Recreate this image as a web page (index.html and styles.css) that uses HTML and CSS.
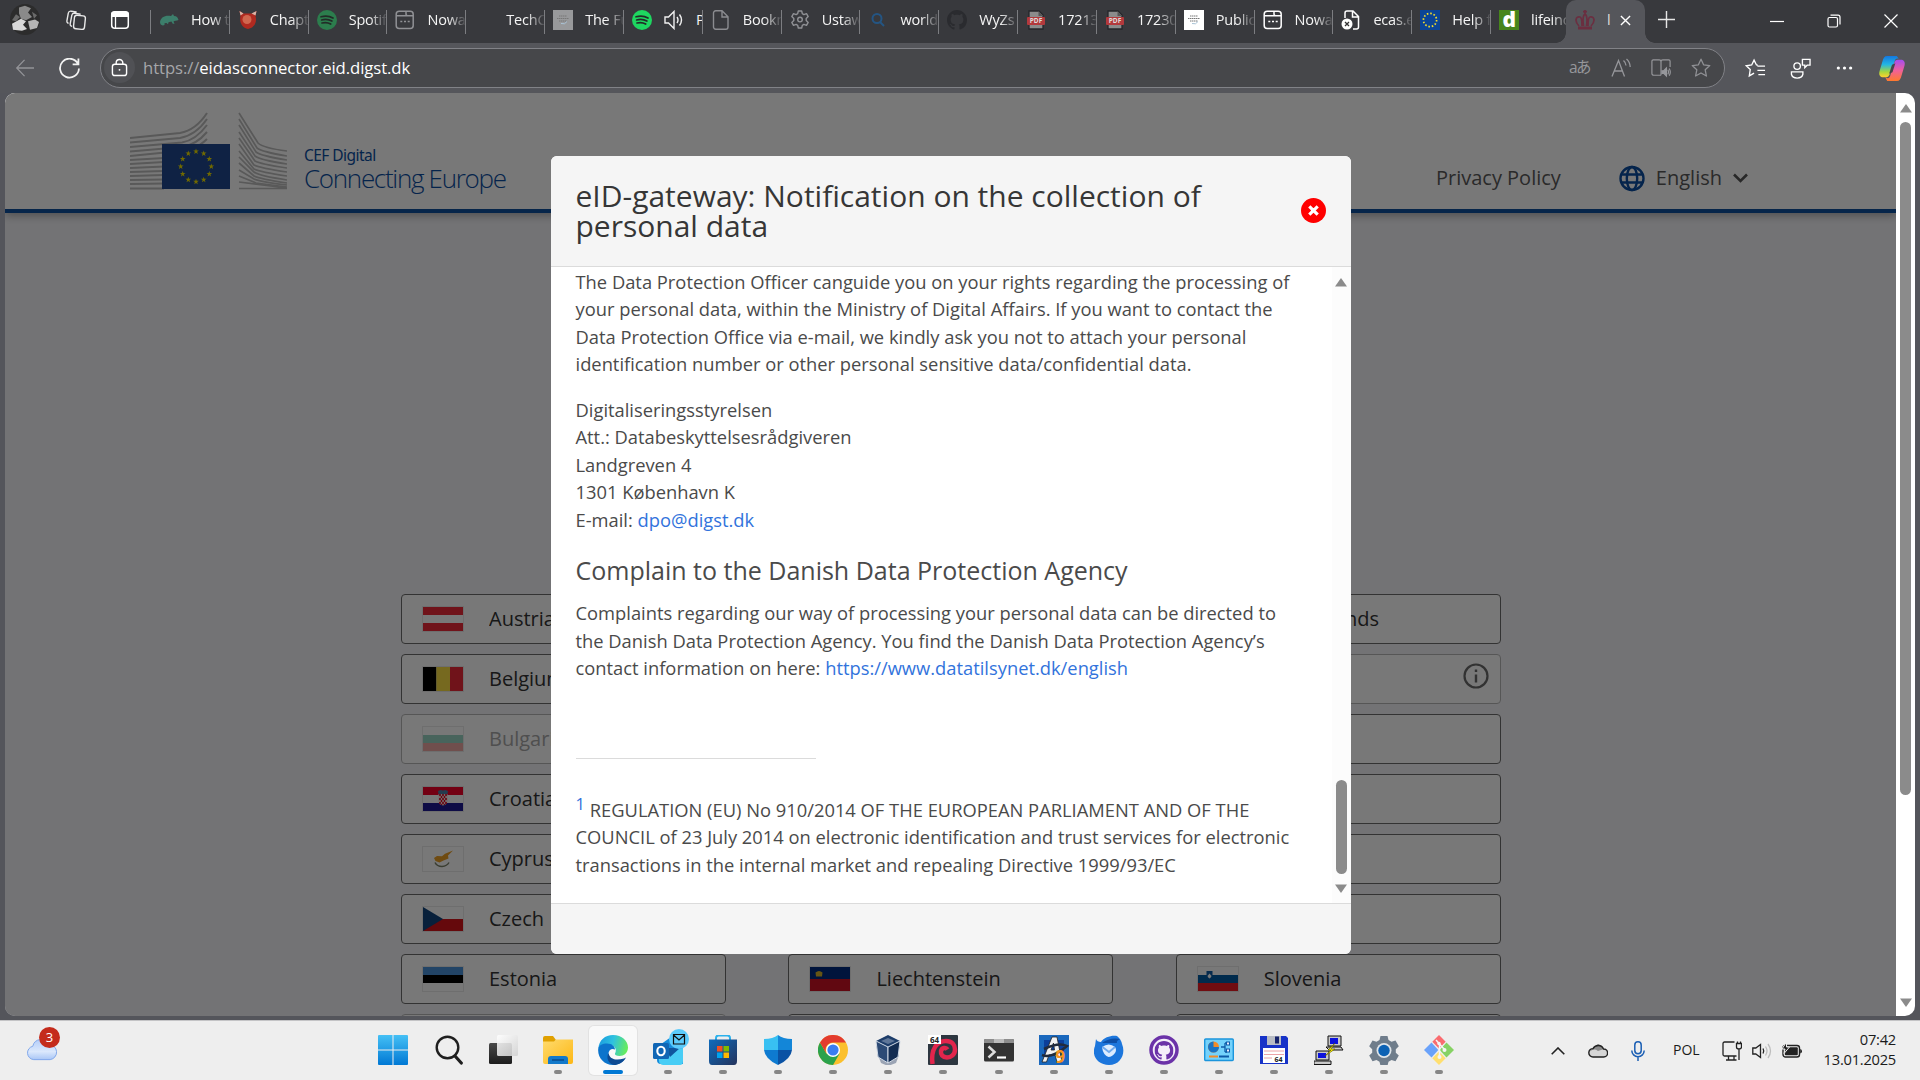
FILE: index.html
```html
<!DOCTYPE html>
<html lang="en">
<head>
<meta charset="utf-8">
<title>eIDAS connector</title>
<link rel="stylesheet" href="styles.css">
</head>
<body>
<svg class="defs" width="0" height="0" aria-hidden="true">
  <defs>
    <linearGradient id="gWin" x1="0" y1="0" x2="0" y2="1"><stop offset="0" stop-color="#45c0f5"/><stop offset="1" stop-color="#0078d4"/></linearGradient>
    <linearGradient id="gFolder" x1="0" y1="0" x2="1" y2="1"><stop offset="0" stop-color="#ffdb6e"/><stop offset="1" stop-color="#fdb714"/></linearGradient>
    <linearGradient id="gEdge" x1="0" y1="0.2" x2="1" y2="0.4"><stop offset="0" stop-color="#1a9be0"/><stop offset="0.5" stop-color="#2fc2df"/><stop offset="1" stop-color="#66eb5e"/></linearGradient>
    <linearGradient id="gStore" x1="0" y1="0" x2="1" y2="1"><stop offset="0" stop-color="#0f6cbd"/><stop offset="1" stop-color="#24335c"/></linearGradient>
    <linearGradient id="gCloud" x1="0" y1="0" x2="0" y2="1"><stop offset="0" stop-color="#b4cdf8"/><stop offset="0.6" stop-color="#dbe8fc"/><stop offset="1" stop-color="#a9c6f6"/></linearGradient>
    <linearGradient id="gCop1" x1="0" y1="0" x2="0" y2="1"><stop offset="0" stop-color="#1377e0"/><stop offset="0.4" stop-color="#22b6e4"/><stop offset="0.75" stop-color="#a6d63e"/><stop offset="1" stop-color="#ffd02e"/></linearGradient>
    <linearGradient id="gCop2" x1="0" y1="0" x2="0" y2="1"><stop offset="0" stop-color="#a44df0"/><stop offset="0.5" stop-color="#f0609b"/><stop offset="1" stop-color="#ff7a2c"/></linearGradient>
    <linearGradient id="gDark" x1="0" y1="0" x2="0" y2="1"><stop offset="0" stop-color="#4a4a4a"/><stop offset="1" stop-color="#1c1c1c"/></linearGradient>
    <linearGradient id="gGlass" x1="0" y1="0" x2="1" y2="1"><stop offset="0" stop-color="#fff"/><stop offset="1" stop-color="#d2d2d2"/></linearGradient>
    <path id="star" d="M0-3 .7-.95 2.85-.93 1.13.37 1.76 2.43 0 1.2-1.76 2.43-1.13.37-2.85-.93-.7-.95z"/>
    <symbol id="spotify" viewBox="0 0 20 20"><circle cx="10" cy="10" r="10" fill="currentColor"/><path d="M4 6.8c4-1.2 8.600-.8 12 1.200M4.600 10c3.500-1 7.300-.6 10.300 1.100M5 13c3-.8 6.200-.5 8.700 1" fill="none" stroke="#222b27" stroke-width="1.700" stroke-linecap="round"/></symbol>
    <symbol id="window" viewBox="0 0 20 20"><rect x="1.200" y="1.200" width="17" height="17.300" rx="3" fill="none" stroke="currentColor" stroke-width="1.500"/><path d="M11 1.200v2.800q0 1.800 1.800 1.800H18M1.200 5.800H11M5.300 11.500h2M9 11.500h2M12.700 11.500h2" fill="none" stroke="currentColor" stroke-width="1.500"/></symbol>
    <symbol id="pdf" viewBox="0 0 20 20"><path d="M3 1h10l4 4v14H3z" fill="#8b8b8b" stroke="#25262a" stroke-width="1.300"/><path d="M12.500 1v5H17" fill="#555"/><rect x="1" y="7" width="18" height="8" rx="1" fill="#b3393c"/><text x="10" y="13.400" text-anchor="middle" class="pdf-label">PDF</text></symbol>
    <symbol id="wef" viewBox="0 0 20 20"><rect width="20" height="20" fill="currentColor"/><path d="M6 6h8M4 8.500h12M6 11h8" stroke="#777" stroke-width="1" stroke-dasharray="1.500 .5"/><path d="M8 13.500q4 1.500 6-2" fill="none" stroke="#a9c3d6"/></symbol>
    <symbol id="eustars" viewBox="-10 -10 20 20"><circle r="6.600" fill="none" stroke="#f4dd2a" stroke-width="1.700" stroke-dasharray="1.600 1.856"/></symbol>
    <symbol id="favstar" viewBox="0 0 20 20"><path d="M10 1.200l2.600 5.600 6.200.8-4.600 4.200 1.200 6.200L10 15l-5.400 3 1.200-6.200L1.200 7.600l6.200-.8z" fill="none" stroke="currentColor" stroke-width="1.300" stroke-linejoin="round"/></symbol>
    <symbol id="gear" viewBox="0 0 20 20"><path d="M8.300 1h3.400l.6 2.700 1.600.9 2.600-.9 1.700 2.900-2 1.900v2l2 1.900-1.700 2.900-2.600-.9-1.600.9-.6 2.700H8.300l-.6-2.700-1.600-.9-2.600.9-1.700-2.900 2-1.900v-2l-2-1.900 1.700-2.900 2.600.9 1.600-.9z" fill="none" stroke="currentColor" stroke-width="1.400" stroke-linejoin="round"/><circle cx="10" cy="9.600" r="2.300" fill="none" stroke="currentColor" stroke-width="1.400"/></symbol>
    <symbol id="octocat" viewBox="0 0 16 16"><path fill="currentColor" d="M8 0C3.580 0 0 3.580 0 8c0 3.540 2.290 6.530 5.470 7.590.4.070.55-.17.55-.38 0-.19-.01-.82-.01-1.490-2.010.37-2.530-.49-2.690-.94-.09-.23-.48-.94-.82-1.130-.28-.15-.68-.52-.01-.53.63-.01 1.080.58 1.230.82.72 1.210 1.870.87 2.330.66.07-.52.28-.87.51-1.070-1.780-.2-3.640-.89-3.640-3.950 0-.87.310-1.590.82-2.150-.08-.2-.36-1.020.08-2.120 0 0 .67-.21 2.200.82.64-.18 1.320-.27 2-.27s1.360.09 2 .27c1.530-1.040 2.200-.82 2.200-.82.440 1.100.16 1.920.08 2.120.51.56.82 1.270.82 2.150 0 3.070-1.870 3.750-3.650 3.950.290.250.540.730.540 1.480 0 1.070-.01 1.930-.01 2.200 0 .210.150.460.550.380A8.010 8.010 0 0 0 16 8c0-4.420-3.580-8-8-8z"/></symbol>
  </defs>
</svg>

<div class="tabstrip">
  <div class="strip-tools">
    <svg class="avatar" viewBox="0 0 30 36" preserveAspectRatio="none"><ellipse cx="15" cy="18" rx="15" ry="18" fill="#2c2c2c"/><path d="M9 4l6-2 6 3-3 5 4 5-6 4-5-2-2-6z" fill="#8a8a8a"/><path d="M2 23l9-6 5 3-3 4 4 5-5 2-9-1z" fill="#d8d8d8"/><path d="M18 20l7-2 4 3-2 7-7 2z" fill="#b5b5b5"/><path d="M6 12l4 3-4 5-4-1zM22 9l5 4-3 4z" fill="#6a6a6a"/></svg>
    <svg class="i22" viewBox="0 0 22 22" fill="none" stroke="#e8e8e8" stroke-width="1.400"><rect x="9" y="6.500" width="11" height="13.500" rx="2.500" transform="rotate(6 14 13)"/><path d="M7 17.500l-1-.6a2 2 0 0 1-.8-2.100l1.600-8.500a2.500 2.500 0 0 1 2.800-2l6 .9M3.500 14.500l-.8-.6a2 2 0 0 1-.8-2.100l1.400-7.600a2.500 2.500 0 0 1 2.800-2l5.500.8"/></svg>
    <svg class="i22 vtabs" viewBox="0 0 22 22"><rect x="2.700" y="2.700" width="16.600" height="16.600" rx="3" fill="none" stroke="#fff" stroke-width="1.500"/><path d="M2 8V5.500A3 3 0 0 1 5 2.500h12a3 3 0 0 1 3 3V8z" fill="#fff"/><path d="M6.500 8v11" stroke="#fff" stroke-width="1.300"/></svg>
  </div>
  <div class="tabs">
    <div class="tab"><svg viewBox="0 0 20 20"><path d="M1 12c1-5 5-7 11-6l2-2 1 2c3 0 4 2 4.500 4-2 1-4 .8-5 1.500l1 2.500-2-.5-1-2-3 .8-.5 2-1.500-1.300c-2-.5-3 1.500-1.500 1.700C3 16.500 1 14.500 1 12z" fill="#3c7e6b"/></svg><span>How t</span></div>
    <div class="tab"><svg viewBox="0 0 20 20"><path d="M1.500 1l4 2.500h8.500L18.500 1l-1 5c2 7-2 12-7.500 13C4 18 1 12 2.500 6z" fill="#b02a20"/><circle cx="9" cy="9.500" r="4.500" fill="#d0674f"/><path d="M1.500 1l4 2.500-3 2zM18.500 1l-5 2.500 4 2z" fill="#d9b5a8"/></svg><span>Chapt</span></div>
    <div class="tab"><svg class="dimgreen"><use href="#spotify"/></svg><span>Spotif</span></div>
    <div class="tab"><svg class="gray"><use href="#window"/></svg><span>Nowa</span></div>
    <div class="tab"><svg></svg><span>TechC</span></div>
    <div class="tab"><svg class="lgray"><use href="#wef"/></svg><span>The Fu</span></div>
    <div class="tab audio"><svg class="green"><use href="#spotify"/></svg><svg viewBox="0 0 20 20" fill="none" stroke="#f0f0f0" stroke-width="1.400"><path d="M1 7h3.500L10 1.500v17L4.500 13H1zM13 7q2 3 0 6M15.500 4.500q4 5.500 0 11"/></svg><span>P</span></div>
    <div class="tab"><svg viewBox="0 0 20 20" fill="none" stroke="#8b8c90" stroke-width="1.400"><path d="M2.500 3a2.200 2.200 0 0 1 2.200-2.200H11l6 6V17a2.200 2.200 0 0 1-2.200 2.200H4.700A2.200 2.200 0 0 1 2.500 17zM11 1v6h6"/></svg><span>Bookm</span></div>
    <div class="tab"><svg class="gray"><use href="#gear"/></svg><span>Ustaw</span></div>
    <div class="tab"><svg viewBox="0 0 20 20" fill="none" stroke="#245583" stroke-width="2"><circle cx="9" cy="8.500" r="4.500"/><path d="M12 12l4 4"/></svg><span>world</span></div>
    <div class="tab"><svg class="dark"><use href="#octocat"/></svg><span>WyZs</span></div>
    <div class="tab"><svg><use href="#pdf"/></svg><span>17213</span></div>
    <div class="tab"><svg><use href="#pdf"/></svg><span>17230</span></div>
    <div class="tab"><svg class="white"><use href="#wef"/></svg><span>Public</span></div>
    <div class="tab"><svg class="white"><use href="#window"/></svg><span>Nowa</span></div>
    <div class="tab"><svg viewBox="0 0 20 20"><path d="M4 8V3A2 2 0 0 1 6 1h6l5.500 5.500V17a2 2 0 0 1-2 2H12M11.500 1v6h6" fill="none" stroke="#fff" stroke-width="1.500"/><circle cx="6" cy="14" r="5.500" fill="#fff"/><path d="M4 12l4 4m0-4l-4 4" stroke="#333" stroke-width="1.300"/></svg><span>ecas.e</span></div>
    <div class="tab"><svg viewBox="0 0 20 20"><rect width="20" height="20" fill="#0b4597"/><use href="#eustars" width="20" height="20"/></svg><span>Help f</span></div>
    <div class="tab"><svg viewBox="0 0 20 20"><rect width="20" height="20" fill="#47851c"/><text x="10.300" y="16.800" text-anchor="middle" class="dlogo">d</text></svg><span>lifeinc</span></div>
  </div>
  <div class="tab-active">
    <svg viewBox="0 0 20 20" fill="none" stroke="#6b2e40" stroke-width="1.700"><path d="M10 0v4M8 1.700h4M4 16c-5-5-3-10 1-9 2 .5 2 5 2 9M16 16c5-5 3-10-1-9-2 .5-2 5-2 9M10 4c-3 2-2 8-1.500 12M10 4c3 2 2 8 1.500 12"/><path d="M3 16.500h14v3H3z" fill="#6b2e40" stroke="none"/></svg>
    <span>l</span>
    <svg class="x" viewBox="0 0 12 12" stroke="#fff" stroke-width="1.500"><path d="M1 1l10 10M11 1L1 11"/></svg>
  </div>
  <svg class="plus" viewBox="0 0 18 18" stroke="#e6e6e6" stroke-width="1.500"><path d="M9 0v18M0 9h18"/></svg>
  <div class="winbtns">
    <svg viewBox="0 0 14 14" stroke="#fff" stroke-width="1.200" fill="none"><path d="M0 7.500h14"/></svg>
    <svg viewBox="0 0 14 14" stroke="#fff" stroke-width="1.200" fill="none"><rect x="1" y="3.500" width="9.500" height="9.500" rx="1.500"/><path d="M3.500 1.200H11A2 2 0 0 1 13 3.200v7.300"/></svg>
    <svg viewBox="0 0 14 14" stroke="#fff" stroke-width="1.200" fill="none"><path d="M.5.500l13 13M13.500.500l-13 13"/></svg>
  </div>
</div>

<div class="toolbar">
  <svg class="back" viewBox="0 0 20 20" fill="none" stroke="#939498" stroke-width="1.400"><path d="M20 10H1M9.500 1L.8 10l8.700 9"/></svg>
  <svg class="reload" viewBox="0 0 20 20" fill="none" stroke="#f2f2f2" stroke-width="1.700"><path d="M18 5.500A9 9 0 1 0 19 10M18.500 .5v5.500H13"/></svg>
  <div class="urlbar">
    <div class="lock"><svg viewBox="0 0 18 20" fill="none" stroke="#fff" stroke-width="1.500"><rect x="1.500" y="6.500" width="15" height="12" rx="2.500"/><path d="M5.500 6.500V5a3.500 3.500 0 0 1 7 0v1.500"/><circle cx="9" cy="12.500" r="1" fill="#fff" stroke="none"/></svg></div>
    <div class="url"><span>https://</span>eidasconnector.eid.digst.dk</div>
    <div class="urlicons">
      <div class="translate">aあ</div>
      <svg viewBox="0 0 20 20" fill="none" stroke="#96979b" stroke-width="1.300"><path d="M1 18.500L7.500 2.500l6 16M3.500 13h8.500M12.500 2.500q2.300 2 2.500 5M15.500 1q3.500 3 3.700 8"/></svg>
      <svg viewBox="0 0 22 20" fill="none" stroke="#96979b" stroke-width="1.300"><path d="M11 18H3a2 2 0 0 1-2-2V2.500A1.500 1.500 0 0 1 2.500 1H9a2 2 0 0 1 2 2v15M11 3a2 2 0 0 1 2-2h6.500A1.500 1.500 0 0 1 21 2.500V9"/><path d="M12 13h2l3-3v9l-3-3h-2z" fill="#96979b"/><path d="M18.500 12q1.500 2.500 0 5M20 10.500q2.500 4 0 8"/></svg>
      <svg class="gray"><use href="#favstar"/></svg>
    </div>
  </div>
  <div class="toolicons">
    <svg viewBox="0 0 22 20" fill="none" stroke="#fff" stroke-width="1.400"><path d="M13.500 6.500L12 6.300 9.500 1.200 7 6.300l-5.700.8 4.200 4-1 6.700 5-3M13 7.500h8M13 12h8M14 16.500h7"/></svg>
    <svg viewBox="0 0 22 22" fill="none" stroke="#fff" stroke-width="1.400"><circle cx="7.500" cy="8.500" r="3.400"/><path d="M1.500 14.500h12V17q-1 4-6 4t-6-4zM13 1.500h8v6h-3l-2.500 2.500V7.500H13z"/></svg>
    <svg class="dots" viewBox="0 0 18 6" fill="#fff"><circle cx="2.500" cy="3" r="1.700"/><circle cx="9" cy="3" r="1.700"/><circle cx="15.500" cy="3" r="1.700"/></svg>
    <svg class="copilot" viewBox="0 0 28 28"><path d="M19 1H9C6 1 5 3 4 7L1 17c-1 4 1 6 4 6h3c2 0 3-1 4-4l5-13c.5-2 2-3 4-2z" fill="url(#gCop1)"/><path d="M9 27h10c3 0 4-2 5-6l3-10c1-4-1-6-4-6h-3c-2 0-3 1-4 4l-4 13c-1 2-2 3-5 1z" fill="url(#gCop2)"/><path d="M14 10l3.500-1.500L14.500 18l-3.500 1.500z" fill="#45464b"/></svg>
  </div>
</div>

<div class="viewport">
  <div class="page">
    <header class="site-header">
      <div class="brand">
        <svg class="logo" viewBox="0 0 157 78">
          <g fill="none" stroke="#bdbdbd" stroke-width="2">
            <path d="M0 26L50 21Q66 18 77 1"/><path d="M0 30.500L50 26Q66 23 77 7"/><path d="M0 35L52 30.500Q66 28 77 13"/><path d="M0 39.500L52 35Q66 33 77 20"/><path d="M0 44L60 38Q70 34 77 27"/>
            <path d="M0 48L34 46M0 52L34 50M0 56L34 54.500M0 60L34 59M0 64L34 63M0 68L34 67.500M0 72L34 71.500M0 76.500H34"/>
          </g>
          <g fill="none" stroke="#bdbdbd" stroke-width="1.700">
            <path d="M109 1L128 31Q133 36 157 39"/><path d="M109 7L127 36Q132 40 157 44"/><path d="M109 13L126 40Q131 44 157 48"/><path d="M109 20L125 44Q130 48 157 52"/><path d="M109 26L125 49Q130 52 157 56"/><path d="M109 32L124 53Q130 56 157 60"/><path d="M109 39L124 57Q130 60 157 64"/><path d="M109 45L124 60Q130 64 157 68"/><path d="M109 51L124 64Q130 67 157 71"/><path d="M109 58L124 67Q132 70 157 73"/><path d="M109 64L126 71L157 75"/><path d="M109 70L157 76M109 76.500H157"/>
          </g>
          <rect x="32" y="32" width="68" height="45" fill="#204a91"/>
          <g fill="#f0e000"><use href="#star" x="66" y="39.500"/><use href="#star" x="73.700" y="41.500"/><use href="#star" x="79.300" y="47"/><use href="#star" x="81.300" y="54.500"/><use href="#star" x="79.300" y="62"/><use href="#star" x="73.700" y="67.700"/><use href="#star" x="66" y="69.700"/><use href="#star" x="58.300" y="67.700"/><use href="#star" x="52.700" y="62"/><use href="#star" x="50.700" y="54.500"/><use href="#star" x="52.700" y="47"/><use href="#star" x="58.300" y="41.500"/></g>
        </svg>
        <div class="wordmark"><div class="cef">CEF Digital</div><div class="connecting">Connecting Europe</div></div>
      </div>
      <nav>
        <span class="privacy">Privacy Policy</span>
        <svg class="globe" viewBox="0 0 26 26" fill="none" stroke="#0b4ea2" stroke-width="2.400"><circle cx="13" cy="13" r="11.500"/><ellipse cx="13" cy="13" rx="5.200" ry="11.500"/><path d="M2.500 9h21M2.500 17h21"/></svg>
        <span class="lang">English</span>
        <svg class="chev" viewBox="0 0 15 10" fill="none" stroke="#555" stroke-width="2.600"><path d="M1 1.500l6.500 6.500L14 1.500"/></svg>
      </nav>
    </header>
    <main class="countries">
      <div class="card"><svg class="flag" viewBox="0 0 40 24"><path fill="#fff" d="M0 0h40v24H0z"/><path fill="#ed2939" d="M0 0h40v8H0zM0 16h40v8H0z"/></svg><span>Austria</span></div>
      <div class="card"></div>
      <div class="card"><svg class="flag" viewBox="0 0 40 24"><path fill="#fff" d="M0 0h40v24H0z"/><path fill="#ae1c28" d="M0 0h40v8H0z"/><path fill="#21468b" d="M0 16h40v8H0z"/></svg><span>Netherlands</span></div>
      <div class="card"><svg class="flag" viewBox="0 0 40 24"><path d="M0 0h13.400v24H0z"/><path fill="#fae042" d="M13.400 0H27v24H13.400z"/><path fill="#ed2939" d="M27 0h13v24H27z"/></svg><span>Belgium</span></div>
      <div class="card"></div>
      <div class="card off"><svg class="info" viewBox="0 0 26 26"><circle cx="13" cy="13" r="11.500" fill="none" stroke="#6a6a6a" stroke-width="2.200"/><path d="M13 11.500v8M13 6.500v2.500" stroke="#6a6a6a" stroke-width="2.400"/></svg></div>
      <div class="card off"><svg class="flag" viewBox="0 0 40 24"><path fill="#fff" d="M0 0h40v8H0z"/><path fill="#99d4c4" d="M0 8h40v8H0z"/><path fill="#eea8a4" d="M0 16h40v8H0z"/></svg><span>Bulgaria</span></div>
      <div class="card"></div>
      <div class="card"></div>
      <div class="card"><svg class="flag" viewBox="0 0 40 24"><path fill="#fff" d="M0 0h40v24H0z"/><path fill="#f5002a" d="M0 0h40v8H0z"/><path fill="#1e1a96" d="M0 16h40v8H0z"/><path d="M15.500 7h9v7q-.5 4-4.500 4.500-4-.5-4.500-4.500z" fill="#f4dfe0"/><path d="M17 7v11M20 7v11.500M23 7v11" stroke="#e0001f" stroke-width="1.600" stroke-dasharray="2 2"/><path d="M18.500 9v9M21.500 9v9" stroke="#e0001f" stroke-width="1.400" stroke-dasharray="2 2"/><path d="M15 4l2.500-1 2.500.5 2.500-.5L25 4l-.5 3h-9z" fill="#4f7fa8"/></svg><span>Croatia</span></div>
      <div class="card"></div>
      <div class="card"></div>
      <div class="card"><svg class="flag" viewBox="0 0 40 24"><path fill="#fff" d="M0 0h40v24H0z"/><path d="M11 11l3-2 5 .3 3-2.500 8-3.300-5 5 .5 3-5 2-4 2-4-1.500z" fill="#eb9f25"/><path d="M12 15.500q2 4 7 4 5-.5 7-4" fill="none" stroke="#7b8268" stroke-width="1.500"/></svg><span>Cyprus</span></div>
      <div class="card"></div>
      <div class="card"></div>
      <div class="card"><svg class="flag" viewBox="0 0 40 24"><path fill="#fff" d="M0 0h40v12H0z"/><path fill="#d7141a" d="M0 12h40v12H0z"/><path fill="#11457e" d="M0 0l20 12L0 24z"/></svg><span>Czech<br>Republic</span></div>
      <div class="card"></div>
      <div class="card"></div>
      <div class="card"><svg class="flag" viewBox="0 0 40 24"><path fill="#4891d9" d="M0 0h40v8H0z"/><path d="M0 8h40v8H0z"/><path fill="#fff" d="M0 16h40v8H0z"/></svg><span>Estonia</span></div>
      <div class="card"><svg class="flag" viewBox="0 0 40 24"><path fill="#002b7f" d="M0 0h40v12H0z"/><path fill="#ce1126" d="M0 12h40v12H0z"/><path d="M5.500 5.500q3.500-3 7 0L12 9.500H6z" fill="#d8b52c"/></svg><span>Liechtenstein</span></div>
      <div class="card"><svg class="flag" viewBox="0 0 40 24"><path fill="#fff" d="M0 0h40v8H0z"/><path fill="#005da4" d="M0 8h40v8H0z"/><path fill="#ed1c24" d="M0 16h40v8H0z"/><path d="M8.500 4h6v5q-.5 2.500-3 3.500-2.500-1-3-3.500z" fill="#0b5aa3"/><path d="M9.500 9l2-2.500 2 2.500q-.5 1.500-2 2.500-1.500-1-2-2.500z" fill="#fff"/></svg><span>Slovenia</span></div>
      <div class="card off"></div><div class="card"></div><div class="card"></div>
    </main>
    <div class="overlay">
      <section class="modal">
        <div class="modal-head">
          <h1>eID-gateway: Notification on the collection of personal data</h1>
          <svg class="close" viewBox="0 0 25 25"><circle cx="12.500" cy="12.500" r="12.500" fill="#f00"/><path d="M8.300 8.300l8.400 8.400M16.700 8.300l-8.400 8.400" stroke="#fff" stroke-width="3.200"/></svg>
        </div>
        <div class="modal-body">
          <div class="modal-text">
            <p>The Data Protection Officer canguide you on your rights regarding the processing of<br>your personal data, within the Ministry of Digital Affairs. If you want to contact the<br>Data Protection Office via e-mail, we kindly ask you not to attach your personal<br>identification number or other personal sensitive data/confidential data.</p>
            <p>Digitaliseringsstyrelsen<br>Att.: Databeskyttelsesrådgiveren<br>Landgreven 4<br>1301 København K<br>E-mail: <a>dpo@digst.dk</a></p>
            <h2>Complain to the Danish Data Protection Agency</h2>
            <p>Complaints regarding our way of processing your personal data can be directed to<br>the Danish Data Protection Agency. You find the Danish Data Protection Agency’s<br>contact information on here: <a>https://www.datatilsynet.dk/english</a></p>
            <hr>
            <p><a class="sup">1</a> REGULATION (EU) No 910/2014 OF THE EUROPEAN PARLIAMENT AND OF THE<br>COUNCIL of 23 July 2014 on electronic identification and trust services for electronic<br>transactions in the internal market and repealing Directive 1999/93/EC</p>
          </div>
          <div class="modal-scroll"><svg viewBox="0 0 12 9"><path d="M6 0l6 8.500H0z"/></svg><i></i><svg viewBox="0 0 12 9"><path d="M6 9L0 .5h12z"/></svg></div>
        </div>
        <div class="modal-foot"></div>
      </section>
    </div>
  </div>
  <div class="scrollbar"><svg viewBox="0 0 12 9"><path d="M6 0l6 8.500H0z"/></svg><i></i><svg viewBox="0 0 12 9"><path d="M6 9L0 .5h12z"/></svg></div>
</div>

<div class="taskbar">
  <div class="weather">
    <svg viewBox="0 0 32 26"><path d="M8 25a7 7 0 0 1-1-13.800A9 9 0 0 1 24 9.500a7.800 7.800 0 0 1 1 15.500z" fill="url(#gCloud)" stroke="#7fa6ea" stroke-width="1"/></svg>
    <b>3</b>
  </div>
  <div class="apps">
    <div class="app idle"><svg viewBox="0 0 30 30"><path fill="url(#gWin)" d="M0 1q0-1 1-1h13.500v14.500H0zM15.500 0H29q1 0 1 1v13.500H15.500zM0 15.500h14.500V30H1q-1 0-1-1zM15.500 15.500H30V29q0 1-1 1H15.500z"/></svg></div>
    <div class="app idle"><svg viewBox="0 0 30 30" fill="none" stroke="#1f1f1f"><circle cx="14.500" cy="12.500" r="10.800" stroke-width="2.400"/><path d="M22 21l6.300 7" stroke-width="3.200" stroke-linecap="round"/></svg></div>
    <div class="app idle"><svg viewBox="0 0 30 30"><rect x="1" y="8" width="23" height="21" rx="1.500" fill="url(#gDark)"/><rect x="9" y="0" width="21" height="21" rx="1.500" fill="url(#gGlass)" opacity=".88"/></svg></div>
    <div class="app"><svg viewBox="0 0 30 30"><path d="M0 3q0-2 2-2h8l3 4-2 4H0z" fill="#e0a000"/><path d="M0 6.500h11l2-2h17V27q0 2-2 2H2q-2 0-2-2z" fill="url(#gFolder)"/><path d="M5 29v-5q0-3 3-3h14q3 0 3 3v5z" fill="#1279ca"/><path d="M9 25h12" stroke="#084b8c" stroke-width="1.500"/></svg></div>
    <div class="app active"><svg viewBox="0 0 30 30"><path d="M.3 14C1 5 7 0 15 0c9 0 15 6 15 12.500 0 5-4 8.500-8.500 8.500-3 0-5-1-4.500-2.500 2-3 .5-8.500-5-8.500C6 10 1 12 .3 14z" fill="url(#gEdge)"/><path d="M.2 14C1 10 5 8.500 9 8.600c5 0 8 3 8 6-3-2-7 .5-6.500 5 .5 5 6 8.500 12 6.500l4-1.500C24 28 20 30 15 30 6 30-.5 22.500.2 14z" fill="#0c74cc"/><path d="M10.500 18c1 6 7 8 15.500 5.500L28 22.500C25 28 20 30 16 30c-6-1.500-8-7-5.500-12z" fill="#0d4a92"/></svg></div>
    <div class="app"><svg viewBox="0 0 30 30"><path d="M4 12L18 2l12 9v18H8q-4 0-4-4z" fill="#168bdb"/><path d="M6 18l24-5v13q0 4-3 4H10q-4-1-4-4z" fill="#48cdf5"/><path d="M12 13l15 0-10 9z" fill="#10569e"/><rect x="0" y="8" width="16" height="16" rx="1.500" fill="#1066b5"/><ellipse cx="8" cy="16" rx="3.700" ry="4.200" fill="none" stroke="#fff" stroke-width="2.100"/></svg><svg class="mailbadge" viewBox="0 0 20 20"><circle cx="10" cy="10" r="10" fill="#5ccbfb"/><path d="M4.500 5.500h11v9.500h-11zM4.500 6l5.500 5 5.500-5" fill="none" stroke="#111" stroke-width="1.200"/></svg></div>
    <div class="app"><svg viewBox="0 0 30 30"><path d="M8 5V3q0-2.500 2.500-2.500h9Q22 .5 22 3v2" fill="none" stroke="#2bb1ec" stroke-width="2"/><path d="M1 4.500h28V26q0 4-3 4H4q-3 0-3-4z" fill="url(#gStore)"/><path fill="#f25022" d="M9 11h5.500v5.500H9z"/><path fill="#7fba00" d="M15.500 11H21v5.500h-5.500z"/><path fill="#00a4ef" d="M9 17.500h5.500V23H9z"/><path fill="#ffb900" d="M15.500 17.500H21V23h-5.500z"/></svg></div>
    <div class="app"><svg viewBox="0 0 30 30"><path d="M15 0Q10 4 1 4v11h14z" fill="#38c0f2"/><path d="M15 0q5 4 14 4v11H15z" fill="#1386d8"/><path d="M1 15q1 9 14 15V15z" fill="#0e7ad0"/><path d="M29 15q-1 9-14 15V15z" fill="#0a52a4"/></svg></div>
    <div class="app"><svg viewBox="0 0 30 30"><circle cx="15" cy="15" r="15" fill="#fbc02d"/><path d="M2 7.500A15 15 0 0 0 15 30l6.500-11.300L15 15 8.500 18.700z" fill="#2ba24c"/><path d="M2 7.500A15 15 0 0 1 28 7.500H15a7.500 7.500 0 0 0-6.500 11.200z" fill="#e33b2e"/><circle cx="15" cy="15" r="7" fill="#fff"/><circle cx="15" cy="15" r="5.600" fill="#3a7df0"/></svg></div>
    <div class="app"><svg viewBox="0 0 30 30"><path d="M5 20l10 8 11-8-3 8-8 3-7-3z" fill="#9ba4b4"/><path d="M3 6L15 0l12 6-2 16-10 6-10-6z" fill="#1d3d6a"/><path d="M3 6l12 6v16L5 22z" fill="#2c4a75" stroke="#d3dbe6"/><path d="M27 6l-12 6v16l10-6z" fill="#122c52" stroke="#d3dbe6"/><path d="M8 6l7-3 7 3-7 3z" fill="#5f7698"/></svg></div>
    <div class="app"><svg viewBox="0 0 30 30"><rect width="30" height="30" rx="1" fill="#2d3640"/><path d="M4.500 29C2.500 14 9 6 18 6c6 0 9 4 9 8.500 0 5-4 8-8 8-4.500 0-6.500-3-6-6.500.8-3.500 5-4 6.500-1.500" fill="none" stroke="#e2254c" stroke-width="4.500"/><path d="M0 0h13v9H0z" fill="#fff"/><text x="6.500" y="8" text-anchor="middle" class="n64">64</text></svg></div>
    <div class="app"><svg viewBox="0 0 30 30"><rect y="4" width="30" height="22.500" rx="1.500" fill="#333"/><path d="M0 8V5.500Q0 4 1.500 4h27Q30 4 30 5.500V8z" fill="#8d8d8d"/><path d="M10 4h10v4H10z" fill="#bbb"/><path d="M4.500 11.500l6 5.500-6 5.500" fill="none" stroke="#ddd" stroke-width="2.500"/><path d="M13 22.500h9" stroke="#fff" stroke-width="2.200"/></svg></div>
    <div class="app"><svg viewBox="0 0 30 30"><rect width="30" height="30" fill="#1a68bd"/><path d="M5 5h20v15H5z" fill="#0c3f9a"/><path d="M3 27L13 2h5l5 25h-5l-2-7h-6l-2.500 7zM12 15h3.500L14.500 8z" fill="#f2f2f2" stroke="#222" stroke-width=".8"/><path d="M3 20q10 4 25-9-8-4-23 3" fill="none" stroke="#222b3c" stroke-width="2.500"/><text x="21" y="28" text-anchor="middle" class="n9">9</text></svg></div>
    <div class="app"><svg viewBox="0 0 30 30"><path d="M2 4q1 3 5 3C10 2 18 0 23 1q4 3 5 8c4 9-1 21-13 21C4 30-3 21 1 11z" fill="#1c76dc"/><path d="M8 8q8-6 18-4-4 2-3 4z" fill="#0d4fa7"/><path d="M8 12q7-5 13 0 2 3 0 6-3 4-6.500 4Q9 20 8 12z" fill="#dcecff"/><path d="M8.500 12l6.500 5 6-5" fill="none" stroke="#6fa9ec" stroke-width="1.800"/></svg></div>
    <div class="app"><svg viewBox="0 0 30 30"><circle cx="15" cy="15" r="13" fill="#f4eef9" stroke="#6b32a8" stroke-width="3.500"/><g color="#6b32a8"><use href="#octocat" x="5.500" y="6" width="19" height="19"/></g></svg></div>
    <div class="app"><svg viewBox="0 0 30 30"><rect x=".7" y="4" width="28.600" height="21.500" rx="1" fill="#74d2fb" stroke="#1b95dc" stroke-width="1.400"/><circle cx="9.500" cy="12" r="5.500" fill="#f28c28"/><path d="M9.500 12V6.500a5.500 5.500 0 1 0 5.500 5.500z" fill="#1874c5"/><path d="M17 12h4M21 8v9M21 8h2M21 17h2" stroke="#0e5ba8" stroke-width="1.300" fill="none"/><path d="M5 21.500h9" stroke="#f28c28" stroke-width="2"/><path d="M15 21.500h10" stroke="#0e5ba8" stroke-width="2"/><rect x="22.500" y="7" width="3" height="3" fill="#eef" stroke="#0e5ba8"/><rect x="22.500" y="14" width="3" height="3" fill="#eef" stroke="#0e5ba8"/></svg></div>
    <div class="app"><svg viewBox="0 0 30 30"><path d="M1 1h26l2 2v26H1z" fill="#1733c8"/><path d="M8 1h14v9H8z" fill="#b8bcc4"/><path d="M16 1.500h4v7h-4z" fill="#16236b"/><path d="M4 13h22v15H4z" fill="#fff"/><path d="M5 16h20M5 19.500h20M5 23h8" stroke="#eca2a6"/><text x="19.500" y="27" text-anchor="middle" class="n64 small">64</text></svg></div>
    <div class="app"><svg viewBox="0 0 30 30"><g stroke="#111" fill="#c9c9c9"><path d="M14 1h13v10H14zM12 12h15l2 3H15zM2 16h13v9H2zM0 26h17v3.500H0z"/></g><path d="M16 3h8v6h-8zM4 18h8v5H4z" fill="#0c12dc"/><path d="M21 8l-7 7h3l-6 6 10-7h-4z" fill="#fff000" stroke="#555500" stroke-width=".6"/></svg></div>
    <div class="app"><svg viewBox="0 0 30 30"><path d="M11.500 1h7l1 4 3 1.700 4-1.200 3.300 5.700-3 3v3.500l3 2.800-3.300 5.700-4-1.200-3 1.700-1 4h-7l-1-4-3-1.700-4 1.200L.2 20.500l3-2.800v-3.500l-3-3 3.300-5.700 4 1.200L10.500 5z" fill="#6f7d8b"/><circle cx="15" cy="15.500" r="7.500" fill="#dfe5ea"/><circle cx="15" cy="15.500" r="5.700" fill="#0c62b4"/></svg></div>
    <div class="app"><svg viewBox="0 0 30 30"><path d="M15 0l6.700 6.700L15 13.500 8.300 6.700z" fill="#fa6b6f"/><path d="M7.500 7.500L14.300 15l-6.800 7.500L0 15z" fill="#6aa2fa"/><path d="M22.500 7.500L30 15l-7.500 7.500L15.700 15z" fill="#86d264"/><path d="M15 16.500l6.700 6.800L15 30l-6.700-6.700z" fill="#ffdf70"/><path d="M12 5l8 9M15.500 9v13" stroke="#f5f5f5" stroke-width="1.500"/><g fill="#f5f5f5"><circle cx="20.500" cy="15" r="2"/><circle cx="15.500" cy="22" r="2"/><circle cx="15" cy="8.500" r="1.700"/></g></svg></div>
  </div>
  <div class="tray">
    <svg class="t-chev" viewBox="0 0 14 8" fill="none" stroke="#222" stroke-width="1.600"><path d="M.7 7.300L7 1l6.300 6.300"/></svg>
    <svg class="t-cloud" viewBox="0 0 20 15"><path d="M5 14a4.200 4.200 0 0 1 0-8.400A5.800 5.800 0 0 1 15.500 6a4 4 0 0 1 .2 8z" fill="#d6d6d6"/><path d="M2 8.500Q6 5 10 8l6-2-2-3-4-2-5 4z" fill="#8a8a8a"/><path d="M5 14a4.200 4.200 0 0 1 0-8.400A5.800 5.800 0 0 1 15.500 6a4 4 0 0 1 .2 8z" fill="none" stroke="#222" stroke-width="1.400"/></svg>
    <svg class="t-mic" viewBox="0 0 14 20" fill="none" stroke="#1b5fb4" stroke-width="1.500"><rect x="3.800" y=".8" width="6.400" height="12" rx="3.200"/><path d="M.8 9.500a6.200 6.200 0 0 0 12.400 0M7 16v4"/></svg>
    <span class="pol">POL</span>
    <svg class="t-net" viewBox="0 0 20 20" fill="none" stroke="#222" stroke-width="1.300"><path d="M12.500 1H2.500A1.500 1.500 0 0 0 1 2.500v11A1.500 1.500 0 0 0 2.500 15h12M4 19h10.500M6.500 15v4M12 15v4M14.500 2.500h5v3.500q0 2-2.500 2t-2.500-2zM17 8v11M15.500 2.500V.500M18.500 2.500V.500"/></svg>
    <svg class="t-vol" viewBox="0 0 20 18" fill="none" stroke="#222" stroke-width="1.300"><path d="M.8 6h3L8.500 2.500v13L3.800 12h-3zM11 6.500q1.500 2.500 0 5"/><path d="M13.500 4.500q3 4.500 0 9M16 2q5 7 0 14" stroke="#bdbdbd"/></svg>
    <svg class="t-bat" viewBox="0 0 20 16"><rect x="1" y="3.500" width="16.500" height="11.500" rx="2.500" fill="none" stroke="#222" stroke-width="1.400"/><rect x="2.800" y="5.300" width="13" height="8" rx="1" fill="#222"/><path d="M18.200 7q1.800.2 1.800 2.200t-1.800 2.200z" fill="#222"/><path d="M4.500 0L0 7h3l-1 4.500L7.500 5H4.500z" fill="#222" stroke="#eee" stroke-width="1"/></svg>
    <div class="clock">07:42<br>13.01.2025</div>
  </div>
</div>
</body>
</html>
```
FILE: styles.css
```css
* { box-sizing: border-box; }
html, body { margin: 0; height: 100%; overflow: hidden; }
body {
  display: flex;
  flex-direction: column;
  background: #54555b;
  font-family: "Open Sans", "Noto Sans", sans-serif;
}
svg { display: block; flex: none; }
.defs { position: absolute; }

/* Tab strip */
.tabstrip {
  display: flex;
  height: 43px;
  flex: none;
  background: #38393d;
}
.strip-tools {
  display: flex;
  align-items: center;
  width: 150px;
  padding: 0 0 4px 10px;
  gap: 25px;
}
.avatar { width: 30px; height: 31px; }
.i22 { width: 22px; height: 24px; }
.vtabs { width: 22px; margin-left: -3px; }
.tabs { display: flex; width: 1419px; flex: none; }
.tab {
  display: flex;
  align-items: center;
  position: relative;
  flex: 1 1 0;
  min-width: 0;
  padding: 0 0 3px 9px;
  gap: 12px;
  overflow: hidden;
}
.tab::before {
  content: "";
  position: absolute;
  left: 0;
  top: 10px;
  width: 1px;
  height: 24px;
  background: #7c7d81;
}
.tab svg, .tab-active svg:first-child { width: 20px; height: 20px; }
.tab span {
  flex: 1;
  overflow: hidden;
  margin-top: -2px;
  white-space: nowrap;
  color: #f5f5f5;
  font-size: 14.500px;
  letter-spacing: -.2px;
  -webkit-mask-image: linear-gradient(90deg, #000 55%, transparent 105%);
  mask-image: linear-gradient(90deg, #000 55%, transparent 105%);
}
.tab.audio span { -webkit-mask-image: none; mask-image: none; }
.dimgreen { color: #2c7d4d; }
.green { color: #1ed760; }
.gray { color: #909195; }
.lgray { color: #98999b; }
.white { color: #fff; }
.dark { color: #2a2b2f; }
.pdf-label { font: 700 6.500px "Open Sans", sans-serif; fill: #ddd; }
.dlogo { font: 800 21px "Open Sans", sans-serif; fill: #fff; }
.tab-active {
  display: flex;
  align-items: center;
  position: relative;
  width: 79px;
  margin-left: -3px;
  padding: 0 0 3px 9px;
  border-radius: 10px 10px 0 0;
  background: #55565b;
  color: #ddd;
  font-size: 14.500px;
}
.tab-active::before, .tab-active::after {
  content: "";
  position: absolute;
  bottom: 0;
  width: 10px;
  height: 10px;
}
.tab-active::before { left: -10px; background: radial-gradient(circle at 0 0, transparent 9.500px, #55565b 10px); }
.tab-active::after { right: -10px; background: radial-gradient(circle at 100% 0, transparent 9.500px, #55565b 10px); }
.tab-active span { margin: -2px 0 0 12px; }
.tab-active .x { width: 11px; height: 11px; margin-left: 9px; }
.plus { width: 17px; height: 17px; margin: 11px 0 0 13px; }
.winbtns { display: flex; gap: 43px; margin: 14px 22px 0 auto; }
.winbtns svg { width: 14px; height: 14px; }

/* Address bar */
.toolbar {
  display: flex;
  align-items: center;
  height: 50px;
  flex: none;
  padding-left: 15px;
  background: #55565b;
}
.back { width: 20px; height: 18px; margin-top: -1px; }
.reload { width: 21px; height: 21px; margin-left: 24px; }
.urlbar {
  display: flex;
  align-items: center;
  width: 1625px;
  height: 40px;
  margin-left: 20px;
  padding: 0 13px 0 3px;
  border: 1px solid #818287;
  border-radius: 20px;
  background: #46474a;
}
.lock {
  display: flex;
  align-items: center;
  justify-content: center;
  width: 31px;
  height: 31px;
  margin-top: -2px;
  border-radius: 50%;
  background: #505155;
}
.lock svg { width: 17px; height: 19px; }
.url { margin: -2px 0 0 8px; color: #fff; font-size: 16.700px; letter-spacing: -.08px; }
.url span { color: #a5a6a9; }
.urlicons { display: flex; align-items: center; gap: 20px; margin-left: auto; }
.urlicons svg { width: 20px; height: 20px; }
.translate { width: 22px; margin-top: -3px; color: #96979b; font: 15.500px "Open Sans", "Noto Sans CJK JP", sans-serif; letter-spacing: -1.500px; white-space: nowrap; }
.toolicons { display: flex; align-items: center; gap: 24px; margin-left: 20px; }
.toolicons svg { width: 21px; height: 21px; }
.toolicons .dots { width: 17px; height: 6px; margin-left: 1px; }
.toolicons .copilot { width: 28px; height: 27px; margin-left: 1px; }

/* Web page area */
.viewport {
  display: flex;
  height: 923px;
  flex: none;
  margin: 0 5px;
  border-radius: 10px;
  overflow: hidden;
}
.page { position: relative; flex: 1; overflow: hidden; background: #f5f5f9; }
.scrollbar {
  display: flex;
  flex-direction: column;
  align-items: center;
  width: 19px;
  padding: 11px 0 9px;
  background: #fff;
}
.scrollbar svg, .modal-scroll svg { width: 12px; height: 9px; fill: #8b8b8b; }
.scrollbar i { width: 11px; height: 673px; margin: 9px 0 auto; border-radius: 6px; background: #8b8b8b; }
.site-header {
  display: flex;
  justify-content: space-between;
  height: 120px;
  padding: 19px 148px 0 125px;
  border-bottom: 4px solid #0e4f9e;
  background: #fff;
  box-shadow: 0 3px 8px rgba(0, 0, 0, .3);
}
.brand { display: flex; gap: 17px; }
.logo { width: 157px; height: 78px; }
.wordmark { padding-top: 32px; color: #0b4ea2; }
.cef { font: 15.500px/22px "Noto Sans", sans-serif; letter-spacing: -.55px; }
.connecting { font: 300 26px/24px "Open Sans", sans-serif; letter-spacing: -1.300px; white-space: nowrap; }
nav { display: flex; align-items: center; height: 28px; margin-top: 52px; color: #5a5a5a; font-size: 20px; }
nav span { margin-top: -2px; }
.globe { width: 26px; height: 27px; margin: 0 11px 0 58px; }
.chev { width: 15px; height: 10px; margin-left: 11px; }
.countries {
  display: grid;
  grid-template-columns: repeat(3, 325px);
  grid-auto-rows: 50px;
  gap: 10px 62.400px;
  margin: 381px 0 0 396px;
}
.card {
  display: flex;
  align-items: center;
  padding-left: 21px;
  border: 1px solid #6c6c6c;
  border-radius: 4px;
  background: #fff;
  color: #333;
  font-size: 20px;
}
.card span { height: 28px; margin-top: -1px; line-height: 28px; overflow: hidden; }
.card.off { border-color: #b8b8b8; color: #a8a8a8; }
.flag { width: 40px; height: 24px; margin-right: 26px; outline: 1px solid #eaeaea; }
.info { width: 26px; height: 26px; margin: -6px 11px 0 auto; }
.overlay {
  position: absolute;
  inset: 0;
  display: flex;
  align-items: center;
  justify-content: center;
  background: rgba(0, 0, 0, .53);
}
.modal {
  display: flex;
  flex-direction: column;
  width: 800px;
  height: 798px;
  border-radius: 6px;
  overflow: hidden;
  background: #fff;
  color: #4a4a4a;
}
.modal-head {
  display: flex;
  align-items: center;
  justify-content: space-between;
  height: 111px;
  padding: 0 25px;
  border-bottom: 1px solid #dbdbdb;
  background: #f5f5f5;
}
.modal-head h1 { width: 660px; margin: 0; color: #363636; font-size: 30px; line-height: 30px; font-weight: 400; }
.close { width: 25px; height: 25px; }
.modal-body { display: flex; height: 636px; }
.modal-text { flex: 1; min-width: 0; padding: 1px 0 0 25px; font-size: 18.340px; line-height: 27.500px; white-space: nowrap; }
.modal-text p { margin: 0 0 18px; }
.modal-text h2 { margin: 23px 0 15px; font-size: 25px; line-height: 28px; font-weight: 400; }
.modal-text a { color: #3273dc; }
.modal-text .sup { font-size: 16.500px; line-height: 0; position: relative; top: -7px; }
.modal-text hr { width: 240px; height: 1px; margin: 76px 0 37px; border: 0; background: #dbdbdb; }
.modal-scroll {
  display: flex;
  flex-direction: column;
  align-items: center;
  width: 19px;
  flex: none;
  padding: 11px 0 10px;
  background: #fcfcfc;
}
.modal-scroll i { width: 11px; height: 94px; margin: auto 0 10px; border-radius: 6px; background: #8b8b8b; }
.modal-foot { flex: 1; border-top: 1px solid #dbdbdb; background: #f5f5f5; }

/* Taskbar */
.taskbar {
  display: flex;
  align-items: center;
  height: 60px;
  flex: none;
  margin-top: 4px;
  border-top: 1px solid #c4c4c6;
  background: #eee;
}
.weather { position: relative; width: 365px; padding: 0 0 5px 26px; }
.weather svg { width: 31px; height: 26px; }
.weather b {
  position: absolute;
  left: 39px;
  top: -8px;
  width: 21px;
  height: 21px;
  border-radius: 50%;
  background: #c42b1c;
  color: #fff;
  font-size: 13px;
  font-weight: 400;
  line-height: 21px;
  text-align: center;
}
.apps { display: flex; }
.app {
  display: flex;
  flex-direction: column;
  align-items: center;
  position: relative;
  width: 48.100px;
  height: 49px;
  margin: 0 3.500px;
  padding-top: 9px;
  border-radius: 5px;
}
.app > svg { width: 30px; height: 30px; }
.app::after { content: ""; width: 8px; height: 4px; margin-top: 5px; border-radius: 2px; background: #868686; }
.app.idle::after { visibility: hidden; }
.app.active { background: #f9f9f9; box-shadow: 0 0 0 1px #e2e2e2; }
.app.active::after { width: 20px; background: #0078d4; }
.app .mailbadge { position: absolute; left: 25px; top: 3px; width: 20px; height: 20px; }
.n64 { font: 700 8px "Open Sans", sans-serif; fill: #222; }
.n64.small { font-size: 7px; }
.n9 { font: 700 17px "Open Sans", sans-serif; fill: #f7941d; }
.tray { display: flex; align-items: center; margin-left: auto; padding-right: 24px; color: #1b1b1b; font-size: 14px; }
.t-chev { width: 14px; height: 8px; margin-right: 23px; }
.t-cloud { width: 20px; height: 15px; margin-right: 23px; }
.t-mic { width: 14px; height: 20px; margin-right: 28px; }
.pol { width: 27px; margin: -2px 22px 0 0; font-size: 14px; }
.t-net { width: 20px; height: 20px; margin-right: 10px; }
.t-vol { width: 20px; height: 18px; margin-right: 10px; }
.t-bat { width: 20px; height: 16px; margin-top: -1px; }
.clock { width: 94px; margin-top: -3px; text-align: right; line-height: 20px; font-size: 14.700px; letter-spacing: -.25px; }
```
